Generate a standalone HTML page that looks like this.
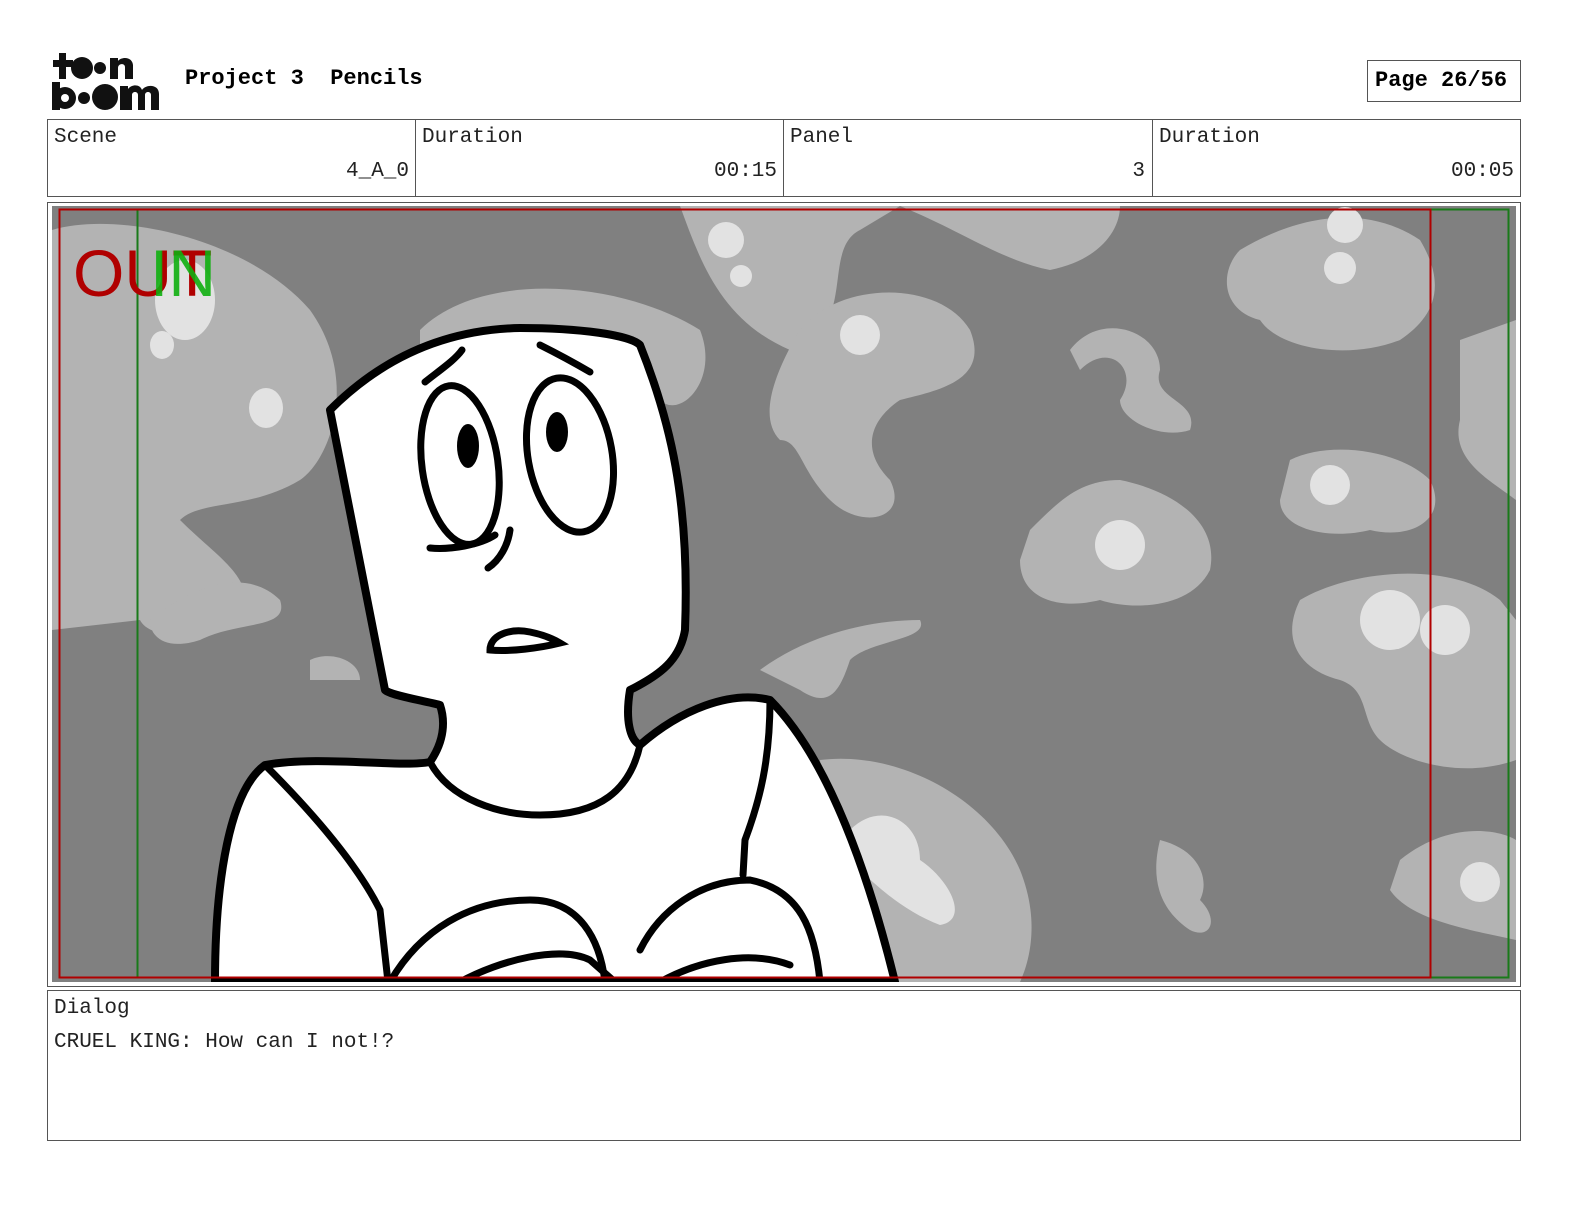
<!DOCTYPE html>
<html><head><meta charset="utf-8"><style>
html,body{margin:0;padding:0;width:1584px;height:1224px;overflow:hidden}
body{background:#fff;position:relative;font-family:"Liberation Mono",monospace}
.a{position:absolute}
.box{position:absolute;border:1px solid #555;box-sizing:border-box}
.lbl{font-size:21px;color:#222;white-space:nowrap}
</style></head><body>
<svg class="a" style="left:50px;top:50px" width="115" height="62" viewBox="0 0 115 62">
<g fill="#111">
<rect x="9" y="3" width="7" height="26"/><rect x="3" y="10" width="20" height="7"/>
<circle cx="32" cy="18" r="11"/><circle cx="50" cy="18" r="6"/>
<path d="M60 29V8h8v3c3-4 14-5 15 4v14h-8V17c0-4-7-4-7 1v11z"/>
<rect x="2" y="32" width="8" height="28"/><circle cx="15" cy="48" r="11"/><circle cx="15" cy="48" r="4" fill="#fff"/>
<circle cx="34" cy="48" r="6"/><circle cx="55" cy="47" r="13"/>
<path d="M70 60V36h8v3c4-5 12-5 14 1c4-6 17-6 17 4v16h-8V45c0-4-6-4-6 0v15h-7V45c0-4-6-4-6 0v15z"/>
</g></svg>
<div class="a" style="left:185px;top:66px;font-size:22px;font-weight:bold;white-space:nowrap">Project 3&nbsp;&nbsp;Pencils</div>
<div class="box" style="left:1367px;top:60px;width:154px;height:42px;font-size:22px;font-weight:bold;padding:7px 0 0 7px;white-space:nowrap">Page 26/56</div>
<div class="box" style="left:47px;top:119px;width:1474px;height:78px"></div>
<div class="a" style="left:415px;top:119px;width:1px;height:78px;background:#555"></div>
<div class="a" style="left:783px;top:119px;width:1px;height:78px;background:#555"></div>
<div class="a" style="left:1152px;top:119px;width:1px;height:78px;background:#555"></div>
<div class="a lbl" style="left:54px;top:126px">Scene</div>
<div class="a lbl" style="left:422px;top:126px">Duration</div>
<div class="a lbl" style="left:790px;top:126px">Panel</div>
<div class="a lbl" style="left:1159px;top:126px">Duration</div>
<div class="a lbl" style="right:1175px;top:160px">4_A_0</div>
<div class="a lbl" style="right:807px;top:160px">00:15</div>
<div class="a lbl" style="right:439px;top:160px">3</div>
<div class="a lbl" style="right:70px;top:160px">00:05</div>
<div class="box" style="left:47px;top:202px;width:1474px;height:785px"></div>
<svg class="a" style="left:52px;top:206px" width="1464" height="776" viewBox="52 206 1464 776">
<rect x="52" y="206" width="1464" height="776" fill="#808080"/>
<g fill="#b3b3b3">
<path d="M52 230C120 210 250 240 310 310C360 380 330 460 300 480C250 510 200 500 180 520C220 560 260 580 240 620C200 640 150 640 140 620L52 630Z"/>
<path d="M420 330C480 270 620 280 700 330C720 380 680 420 660 400L420 360Z"/>
<path d="M680 206C700 260 720 320 790 350C860 330 820 250 860 230L900 206Z"/>
<path d="M900 206C960 230 1000 260 1050 270C1100 260 1120 230 1120 206Z"/>
<path d="M800 330C840 280 940 280 970 330C990 380 940 390 900 400C870 420 860 450 890 480C910 520 860 530 830 500C800 470 800 440 780 440C760 420 770 380 800 330Z"/>
<path d="M1070 350C1100 310 1160 330 1160 370C1150 400 1200 400 1190 430C1160 440 1120 420 1120 400C1140 370 1110 340 1080 370Z"/>
<path d="M1240 250C1290 220 1360 200 1420 240C1450 290 1430 320 1400 340C1350 360 1280 350 1260 320C1220 310 1220 270 1240 250Z"/>
<path d="M1290 460C1330 440 1400 450 1430 480C1450 520 1410 540 1370 530C1330 540 1280 530 1280 500Z"/>
<path d="M1030 530C1060 500 1080 480 1120 480C1170 490 1220 520 1210 570C1190 610 1130 610 1100 600C1060 610 1020 600 1020 560Z"/>
<path d="M1300 600C1350 570 1450 560 1500 600L1516 620V760C1460 780 1400 760 1380 740C1360 720 1370 690 1340 680C1300 670 1280 640 1300 600Z"/>
<path d="M1460 340L1516 320V500C1490 480 1450 460 1460 420Z"/>
<path d="M1400 860C1450 820 1500 830 1516 840V940C1470 930 1410 920 1390 890Z"/>
<path d="M820 760C900 750 990 800 1020 870C1040 920 1030 960 1020 982H840Z"/>
<path d="M150 620C200 580 250 570 280 600C290 630 240 620 200 640C170 650 150 640 150 620Z"/>
<path d="M760 670C800 640 860 620 920 620C930 640 870 640 850 660C840 690 830 710 800 690Z"/>
<path d="M1160 840C1200 850 1210 880 1200 900C1220 920 1210 940 1190 930C1160 910 1150 880 1160 840Z"/>
<path d="M310 660C330 650 360 660 360 680L310 680Z"/>
</g>
<g fill="#e2e2e2">
<ellipse cx="185" cy="300" rx="30" ry="40"/><ellipse cx="162" cy="345" rx="12" ry="14"/><ellipse cx="266" cy="408" rx="17" ry="20"/>
<circle cx="726" cy="240" r="18"/><circle cx="741" cy="276" r="11"/>
<circle cx="860" cy="335" r="20"/><circle cx="1330" cy="485" r="20"/><circle cx="1120" cy="545" r="25"/>
<circle cx="1390" cy="620" r="30"/><circle cx="1445" cy="630" r="25"/><circle cx="1480" cy="882" r="20"/>
<circle cx="1345" cy="225" r="18"/><circle cx="1340" cy="268" r="16"/>
<path d="M850 830C880 800 920 820 920 860C950 880 970 920 940 925C900 910 870 880 850 860Z"/>
</g>
<g fill="#fff" stroke="#000" stroke-width="8" stroke-linejoin="round" stroke-linecap="round">
<path d="M215 982C215 880 230 790 265 765C320 755 400 768 430 762C445 740 445 720 440 705C420 700 390 695 385 690L330 410C360 380 420 330 520 328C580 328 630 335 640 345C670 420 690 500 685 630C680 660 660 675 630 690C625 720 630 740 640 745C680 710 730 690 770 700C830 760 870 880 895 982Z"/>
</g>
<g fill="none" stroke="#000" stroke-width="7" stroke-linecap="round">
<path d="M430 762C450 800 500 815 540 815C600 815 630 790 640 745"/>
<path d="M265 765C320 820 360 870 380 910L388 982"/>
<path d="M770 700C770 760 760 800 745 840L743 875"/>
<path d="M390 982C420 930 470 900 530 900C580 900 600 940 605 982"/>
<path d="M460 982C500 960 560 945 590 960L615 982"/>
<path d="M640 950C660 910 700 880 750 880C800 890 815 930 820 982"/>
<path d="M660 982C700 960 750 950 790 965"/>
<ellipse cx="460" cy="465" rx="38" ry="80" transform="rotate(-8 460 465)"/>
<ellipse cx="570" cy="455" rx="42" ry="78" transform="rotate(-10 570 455)"/>
<path d="M425 382C440 370 455 360 462 350"/><path d="M540 345C560 355 578 365 590 372"/>
<path d="M430 548C450 550 480 545 495 535"/><path d="M488 568C500 560 508 545 510 530"/>
<path d="M490 650C490 635 510 628 530 632C545 635 555 640 560 643C540 648 510 652 490 650Z"/>
</g>
<ellipse cx="468" cy="446" rx="11" ry="22" fill="#000"/><ellipse cx="557" cy="432" rx="11" ry="20" fill="#000"/>
<rect x="137.5" y="209.5" width="1371" height="768" fill="none" stroke="#1a7a1a" stroke-width="2"/>
<rect x="59.5" y="209.5" width="1371" height="768" fill="none" stroke="#b00000" stroke-width="2"/>
<text x="73" y="296" font-family="Liberation Sans,sans-serif" font-size="66" fill="#b00000">OUT</text>
<text x="150" y="296" font-family="Liberation Sans,sans-serif" font-size="66" fill="#10b010" opacity="0.9">IN</text>
</svg>
<div class="box" style="left:47px;top:990px;width:1474px;height:151px"></div>
<div class="a lbl" style="left:54px;top:997px">Dialog</div>
<div class="a lbl" style="left:54px;top:1031px">CRUEL KING: How can I not!?</div>
</body></html>
